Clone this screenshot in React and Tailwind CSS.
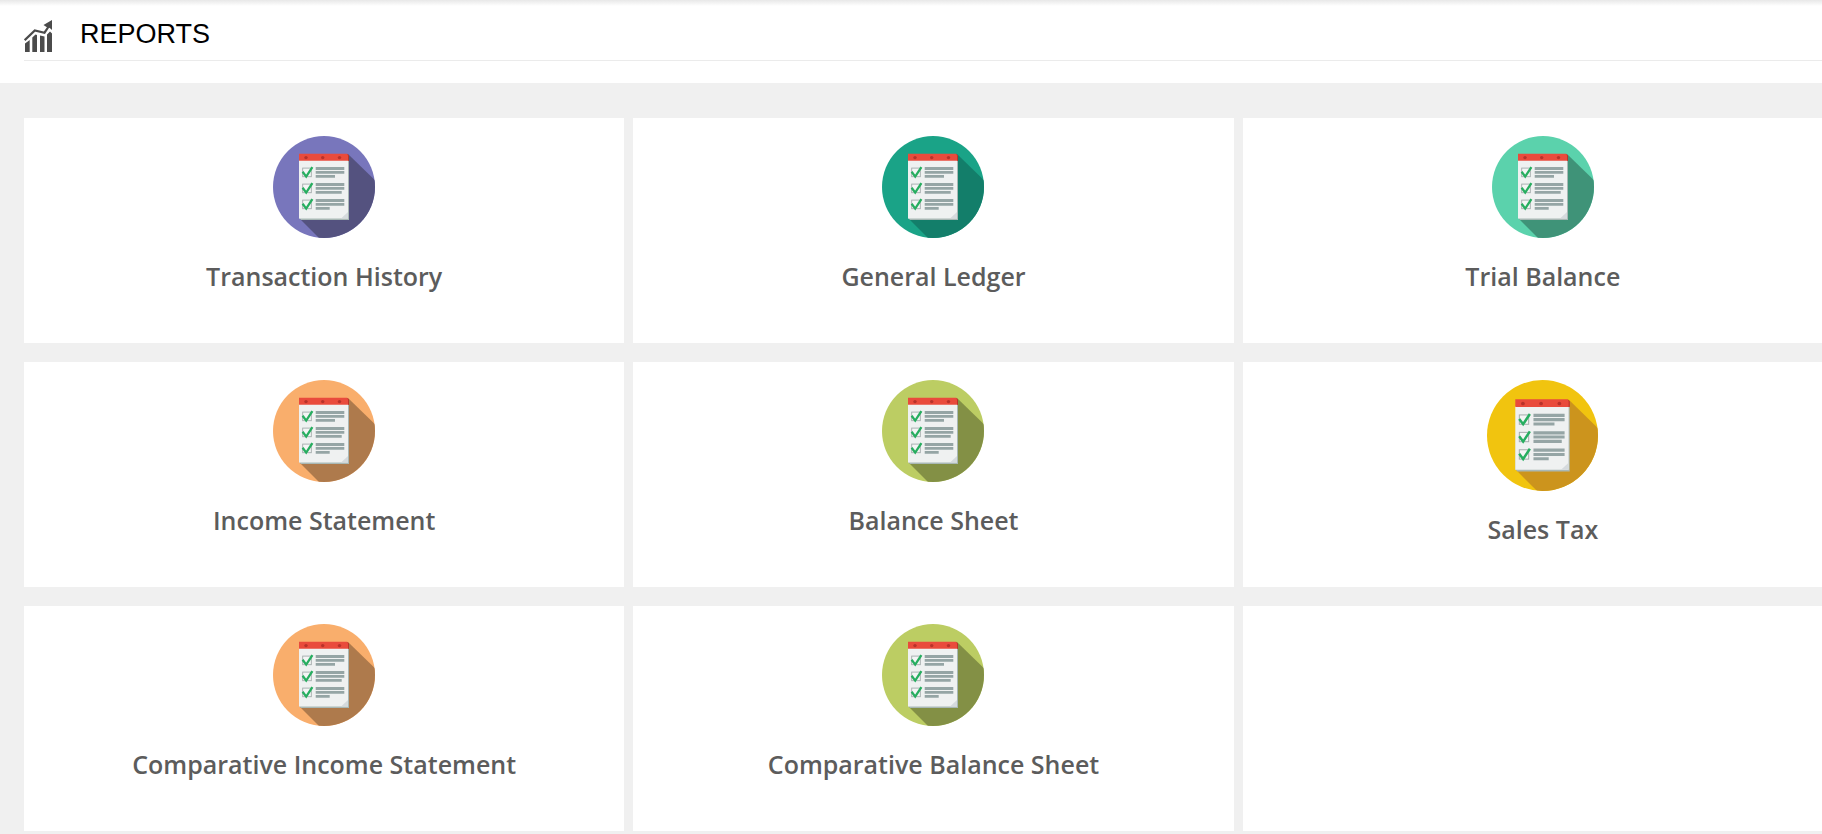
import { useId } from "react";

const reports = [
  { title: "Transaction History", disc: "#7876bc", shade: "#54527f" },
  { title: "General Ledger", disc: "#1aa387", shade: "#137e6a" },
  { title: "Trial Balance", disc: "#5bd2ac", shade: "#3f9378" },
  { title: "Income Statement", disc: "#f9ae6c", shade: "#ae7a4c" },
  { title: "Balance Sheet", disc: "#bccd63", shade: "#839045" },
  { title: "Sales Tax", disc: "#f1c40f", shade: "#cc941d", large: true },
  { title: "Comparative Income Statement", disc: "#f9ae6c", shade: "#ae7a4c" },
  { title: "Comparative Balance Sheet", disc: "#bccd63", shade: "#839045" },
];

const checklist = [
  { y: 31, last: 19.3 },
  { y: 47, last: 26 },
  { y: 63, last: 14 },
];

function ChecklistIcon({ disc, shade, large }) {
  const clip = useId();
  return (
    <svg viewBox="0 0 102 102" aria-hidden="true" className={large ? "size-[111px]" : "size-[102px]"}>
      <clipPath id={clip}>
        <circle cx="51" cy="51" r="51" />
      </clipPath>
      <circle cx="51" cy="51" r="51" fill={disc} />
      <path d="M75 18L110 52V110H54L27 83Z" fill={shade} clipPath={`url(#${clip})`} />
      <path d="M27 24H76V84H28L26 82Z" fill="#a9b8b5" />
      <path d="M26 24H75V82.5H26Z" fill="#eff1f1" />
      <path d="M75 76L68 82.5H75Z" fill="#d5dadd" />
      <path d="M26 17.7H74L76 19.5V24.8H26Z" fill="#e94b3c" />
      <path d="M74 17.7L76 19.5V24.8H75V19.5Z" fill="#b93428" />
      {[33, 49.7, 66.5].map((x) => (
        <circle key={x} cx={x} cy="21.6" r="1.7" fill="#b8322a" />
      ))}
      {checklist.map(({ y, last }) => (
        <g key={y}>
          <rect x="29.7" y={y + 1.1} width="8.6" height="8.6" fill="#f4f5f5" stroke="#a3abab" strokeWidth="0.9" />
          <path d={`M29.6 ${y + 4.8}L33.2 ${y + 9.6}L39.4 ${y + 0.2}`} fill="none" stroke="#27ae60" strokeWidth="2.3" />
          <path d={`M42.7 ${y}h28.6v3h-28.6zM42.7 ${y + 4}h28.6v2.8h-28.6zM42.7 ${y + 8}h${last}v2.8h-${last}z`} fill="#95a5a5" />
        </g>
      ))}
    </svg>
  );
}

function ChartIcon() {
  return (
    <svg viewBox="0 0 28 32" aria-hidden="true" className="h-8 w-7 shrink-0" fill="#4b4b4b">
      <path d="M1 23.5L5.700 20V32H1ZM8.300 17.500L11.500 14.500L13 15V32H8.300ZM16 15.500L20.500 16.500V32H16ZM23 14.500L26 11.500L28 13.500V32H23Z" />
      <path d="M.7 20.200L10.800 10.500L20.500 12.700L25 6" fill="none" stroke="#4b4b4b" strokeWidth="2.2" />
      <path d="M28 0V10L25.800 8L22.500 7L19.500 5Z" />
    </svg>
  );
}

function ReportCard({ title, ...icon }) {
  return (
    <a href="#" className="flex h-[225px] flex-col items-center bg-white pt-[18px]">
      <ChecklistIcon {...icon} />
      <span className="mt-5 text-center font-['Open_Sans',sans-serif] text-[25px] leading-9 font-semibold text-[#5c5c5c]">
        {title}
      </span>
    </a>
  );
}

export default function App() {
  return (
    <div className="min-h-screen overflow-hidden bg-[#f0f0f0]">
      <header className="bg-white bg-linear-to-b from-[#e8e8e8] to-white to-[6px] pb-[22px] pl-6">
        <div className="flex items-center gap-7 border-b border-[#ebebeb] pt-5 pb-2">
          <ChartIcon />
          <h1 className="pb-1 font-['Liberation_Sans',Arial,sans-serif] text-[27px] leading-7 text-black">REPORTS</h1>
        </div>
      </header>
      <main className="-mr-[21px] pt-[35px] pl-6">
        <div className="grid grid-cols-3 gap-x-[9px] gap-y-[19px]">
          {reports.map((report) => (
            <ReportCard key={report.title} {...report} />
          ))}
          <div className="h-[225px] bg-white" />
        </div>
      </main>
    </div>
  );
}
